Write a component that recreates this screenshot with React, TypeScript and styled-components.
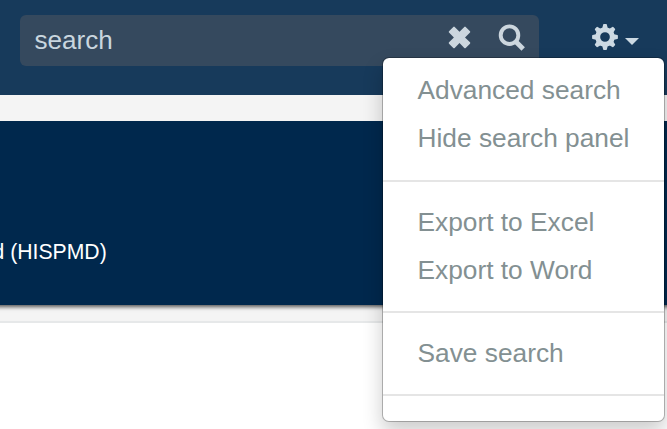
import React from "react";
import styled, { createGlobalStyle } from "styled-components";

const GlobalStyle = createGlobalStyle`
  *, *::before, *::after { box-sizing: border-box; }
  html, body { margin: 0; padding: 0; }
  body {
    background: #fff;
    overflow: hidden;
    font-family: "Liberation Sans", Arial, sans-serif;
  }
`;

const Page = styled.div`
  position: relative;
  width: 667px;
  height: 429px;
  overflow: hidden;
  background: #fff;
`;

const TopBar = styled.header`
  display: flex;
  align-items: flex-start;
  height: 95px;
  padding: 15px 28px 0 20px;
  background: #173a5b;
`;

const SearchBox = styled.div`
  display: flex;
  align-items: center;
  width: 519px;
  height: 51px;
  padding: 0 13px 0 14.5px;
  border-radius: 6px;
  background: #35495e;
`;

const SearchText = styled.span`
  flex: 1;
  padding-bottom: 1px;
  font-size: 26.1px;
  line-height: 30px;
  color: #c9d6df;
`;

const IconButton = styled.button<{ $gap?: number; $shift?: number }>`
  display: flex;
  margin: 0 0 ${(p) => p.$shift ?? 0}px ${(p) => p.$gap ?? 0}px;
  padding: 0;
  border: 0;
  background: none;
  color: #ccd6de;
`;

const SettingsButton = styled.button`
  display: flex;
  align-items: flex-start;
  gap: 7px;
  margin: 9px 0 0 53px;
  padding: 0;
  border: 0;
  background: none;
  color: #ccd9e3;
`;

const Caret = styled.span`
  margin-top: 14px;
  border-top: 7px solid currentColor;
  border-left: 7px solid transparent;
  border-right: 7px solid transparent;
`;

const Content = styled.div`
  height: 228px;
  padding-top: 26px;
  border-bottom: 2px solid #e6e8e9;
  background: #f4f4f4;
`;

const Banner = styled.section`
  height: 184px;
  margin: 0 -10px;
  padding: 119px 10px 0;
  background: #00284d;
  box-shadow: 0 2px 4px rgba(0, 0, 0, 0.65);
  clip-path: inset(0 0 -10px 0);
`;

const BannerTitle = styled.div`
  margin-left: -7.5px;
  font-size: 21.2px;
  line-height: 24px;
  color: #fff;
  white-space: nowrap;
`;

const Menu = styled.nav`
  position: absolute;
  top: 57px;
  left: 382px;
  width: 283px;
  height: 365px;
  padding-top: 8px;
  border: 1px solid rgba(0, 0, 0, 0.25);
  border-radius: 7px;
  background: #fff;
  background-clip: padding-box;
  box-shadow: 0 10px 20px rgba(0, 0, 0, 0.2);
`;

const MenuItem = styled.a`
  display: block;
  height: 48px;
  padding-left: 34.5px;
  font-size: 26.3px;
  line-height: 48px;
  color: #839092;
  white-space: nowrap;
`;

const Divider = styled.hr<{ $top?: number }>`
  height: 2px;
  margin: ${(p) => p.$top ?? 17}px 0 16px;
  border: 0;
  background: #e5e5e5;
`;

const CloseIcon = () => (
  <svg width="23" height="23" viewBox="0 0 23 23" fill="currentColor">
    <path d="M5.3.9Q6 .3 6.7.9L11.5 5.8 16.3.9Q17 .3 17.7.9L22 5.2Q22.6 5.9 22 6.6L17 11.4 22 16.3Q22.6 17 22 17.7L17.7 21.9Q17 22.5 16.3 21.9L11.5 17.1 6.7 21.9Q6 22.5 5.3 21.9L1 17.7Q.4 17 1 16.3L5.9 11.4 1 6.6Q.4 5.9 1 5.2Z" />
  </svg>
);

const SearchIcon = () => (
  <svg width="28" height="28" viewBox="0 0 28 28" fill="none" stroke="currentColor">
    <circle cx="11.5" cy="11.2" r="8.8" strokeWidth="3.9" />
    <path d="M18.2 18 25.2 25" strokeWidth="4.8" strokeLinecap="butt" />
  </svg>
);

const teeth = [0, 45, 90, 135, 180, 225, 270, 315];

const GearIcon = () => (
  <svg width="26" height="26" viewBox="-13 -13 26 26" fill="currentColor">
    {teeth.map((angle) => (
      <path
        key={angle}
        d="M-3.2-7 -1.9-12.3Q-1.8-12.9-1.2-12.9H1.2Q1.8-12.9 1.9-12.3L3.2-7Z"
        transform={`rotate(${angle})`}
      />
    ))}
    <circle r="7.3" fill="none" stroke="currentColor" strokeWidth="4.9" />
  </svg>
);

export default function App() {
  return (
    <>
      <GlobalStyle />
      <Page>
        <TopBar>
          <SearchBox>
            <SearchText>search</SearchText>
            <IconButton aria-label="Clear" $shift={6}>
              <CloseIcon />
            </IconButton>
            <IconButton aria-label="Search" $gap={27} $shift={5}>
              <SearchIcon />
            </IconButton>
          </SearchBox>
          <SettingsButton aria-label="Settings">
            <GearIcon />
            <Caret />
          </SettingsButton>
        </TopBar>
        <Content>
          <Banner>
            <BannerTitle>d (HISPMD)</BannerTitle>
          </Banner>
        </Content>
        <Menu>
          <MenuItem>Advanced search</MenuItem>
          <MenuItem>Hide search panel</MenuItem>
          <Divider $top={18} />
          <MenuItem>Export to Excel</MenuItem>
          <MenuItem>Export to Word</MenuItem>
          <Divider />
          <MenuItem>Save search</MenuItem>
          <Divider />
        </Menu>
      </Page>
    </>
  );
}
